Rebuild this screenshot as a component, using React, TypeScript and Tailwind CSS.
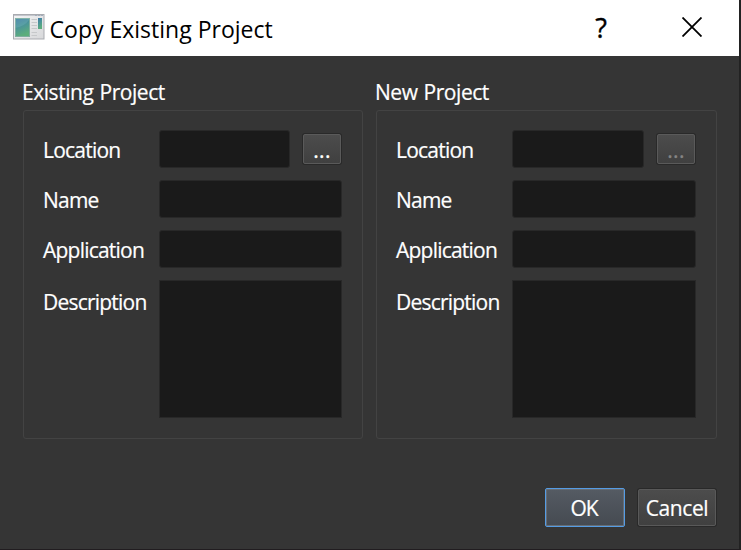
import React from "react";

const field = "h-[38px] min-w-0 border border-[#282828] bg-[#1a1a1a] outline-none";
const label = "w-[116px] shrink-0 whitespace-nowrap text-[21px] leading-[38px] tracking-[-0.78px] [-webkit-text-stroke:0.2px_white]";

function WindowIcon() {
  return (
    <svg width="32" height="26" viewBox="0 0 32 26">
      <defs>
        <linearGradient id="pane" x1="0" y1="0" x2="0.35" y2="1">
          <stop offset="0" stopColor="#3f78a5" />
          <stop offset="0.48" stopColor="#4b949a" />
          <stop offset="1" stopColor="#5cae7b" />
        </linearGradient>
        <linearGradient id="frame" x1="0" y1="0" x2="1" y2="1">
          <stop offset="0" stopColor="#f4f4f5" />
          <stop offset="1" stopColor="#d7d8da" />
        </linearGradient>
      </defs>
      <rect x="0.5" y="0.5" width="30.5" height="24.5" fill="url(#frame)" stroke="#a9abb0" />
      <path d="M1 1.5h30" stroke="#c3c6cc" />
      <path d="M22 1.5h8" stroke="#a3adba" strokeDasharray="2 1" />
      <rect x="2.5" y="4.5" width="14" height="18" fill="url(#pane)" stroke="#7fae9f" />
      <path d="M2 14Q11 13 17 5V4H2Z" fill="#8ec9ca" opacity=".23" />
      <path d="M18.5 5.5H24M18.5 8.5H24M18.5 11.5H24M18.5 14.5H24M18.5 18.5H24M18.5 21.5H24" stroke="#c6c8ca" />
      <rect x="25" y="4" width="4" height="11" fill="url(#pane)" />
    </svg>
  );
}

function BrowseButton({ disabled = false }: { disabled?: boolean }) {
  return (
    <button
      disabled={disabled}
      aria-label="Browse"
      className={`mt-1 flex h-[30px] w-[38px] shrink-0 items-center justify-center rounded-[2px] border border-[#5a5a5a] bg-linear-to-b from-[#4c4c4c] to-[#404040] pt-[3px] text-[21px] leading-[27px] tracking-[0.4px] [-webkit-text-stroke:0.3px] shadow-[0_0_0_1px_#292929] ${disabled ? "text-[#858585]" : "text-white"}`}
    >
      ...
    </button>
  );
}

function ProjectPanel({ title, isNew = false }: { title: string; isNew?: boolean }) {
  return (
    <section className={isNew ? "w-[342px]" : "w-[341px]"}>
      <h2 className="h-[34px] pt-px text-[21px] leading-[30px] tracking-[-0.45px] [word-spacing:1px] [-webkit-text-stroke:0.2px_white]">{title}</h2>
      <div className="ml-px flex h-[329px] flex-col gap-3 rounded-[3px] border border-[#434343] pt-[19px] pr-5 pl-[19px]">
        <div className="flex h-[38px]">
          <label className={`${label} pt-px`}>Location</label>
          <input aria-label={`${title} Location`} className={`${field} mr-[13px] flex-1 rounded-[3px]`} />
          <BrowseButton disabled={isNew} />
          <span className="w-px shrink-0" />
        </div>
        <div className="flex h-[38px]">
          <label className={`${label} pt-px`}>Name</label>
          <input aria-label={`${title} Name`} className={`${field} flex-1 rounded-[3px]`} />
        </div>
        <div className="flex h-[38px]">
          <label className={`${label} pt-px`}>Application</label>
          <input aria-label={`${title} Application`} className={`${field} flex-1 rounded-[3px]`} />
        </div>
        <div className="flex h-[138px]">
          <label className={`${label} pt-[3px]`}>Description</label>
          <textarea aria-label={`${title} Description`} className="h-[138px] min-w-0 flex-1 resize-none border border-[#282828] bg-[#1a1a1a]" />
        </div>
      </div>
    </section>
  );
}

export default function App() {
  return (
    <main className="h-[550px] w-[741px] overflow-hidden border-r-2 border-b border-r-[#222] border-b-[#211d20] bg-[#353535] font-['Open_Sans',sans-serif] text-white">
      <header className="flex h-14 bg-white text-black">
        <div className="mt-[14px] ml-[13px] w-[37px]"><WindowIcon /></div>
        <h1 className="w-[513px] text-[23px] leading-[58px] whitespace-nowrap">Copy Existing Project</h1>
        <button aria-label="Help" className="h-[54px] w-[75px] shrink-0 pl-[13px] text-[27px] leading-[53px] [-webkit-text-stroke:0.4px_black]">?</button>
        <button aria-label="Close" className="flex h-[54px] w-[107px] shrink-0 items-center justify-center pl-3">
          <svg width="20" height="20" viewBox="0 0 20 20" fill="none" stroke="#000" strokeWidth="1.8"><path d="m.5.5 19 19m0-19-19 19" /></svg>
        </button>
      </header>
      <div className="flex gap-3 pt-5 pl-[22px]">
        <ProjectPanel title="Existing Project" />
        <ProjectPanel title="New Project" isNew />
      </div>
      <footer className="mt-[49px] flex items-center justify-end gap-[13px] pr-[23px]">
        <button className="h-[39px] w-20 rounded-[2px] border border-[#559ce4] bg-linear-to-b from-[#555b63] to-[#454a51] pt-px pr-[2px] text-[21px] leading-[36px] tracking-[-1.2px] shadow-[inset_0_0_0_1px_#666d75] [-webkit-text-stroke:0.2px_white]">OK</button>
        <button className="h-[37px] w-[78px] rounded-[2px] border border-[#595959] bg-linear-to-b from-[#4c4c4c] to-[#404040] pt-px text-[21px] leading-[34px] tracking-[-0.4px] shadow-[0_0_0_1px_#292929] [-webkit-text-stroke:0.2px_white]">Cancel</button>
      </footer>
    </main>
  );
}
